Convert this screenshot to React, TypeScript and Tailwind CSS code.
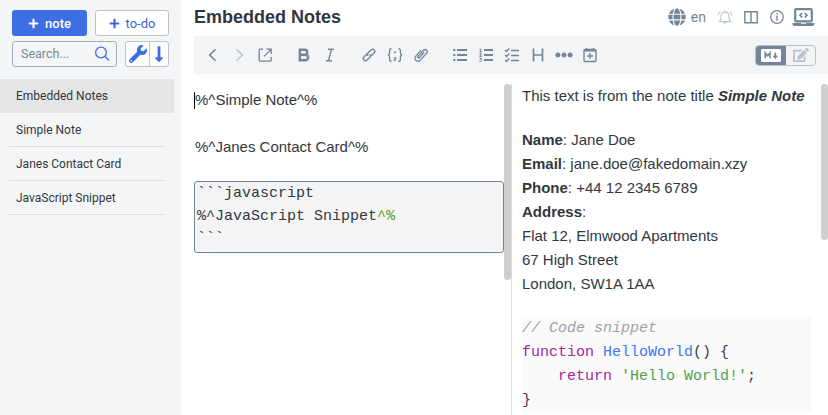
import React from 'react';
import { FaPlus, FaWrench, FaLongArrowAltDown, FaGlobe, FaEdit, FaEllipsisH } from 'react-icons/fa';

type IconProps = { children: React.ReactNode; size?: number };

function Icon({ children, size = 16 }: IconProps) {
  return (
    <svg width={size} height={size} viewBox="0 0 16 16" fill="none" stroke="currentColor" strokeWidth="1.3" className="block shrink-0">
      {children}
    </svg>
  );
}

const Back = () => <Icon><path d="M10.5 2.3 4.7 8l5.8 5.7" strokeWidth="1.6" /></Icon>;
const Forward = () => <Icon><path d="M5.5 2.3 11.3 8l-5.8 5.7" strokeWidth="1.6" /></Icon>;
const External = () => (
  <Icon><path d="M6 2.2H3.2a1 1 0 0 0-1 1v10a1 1 0 0 0 1 1h10a1 1 0 0 0 1-1V10M9.3 2.2h4.9V7M14 2.4 7 9.4" /></Icon>
);
const Bold = () => (
  <Icon><path d="M3.8 2.7h4.9a2.5 2.5 0 0 1 0 5H3.8zm0 5h5.5a2.8 2.8 0 0 1 0 5.6H3.8z" strokeWidth="2.4" /></Icon>
);
const Italic = () => <Icon><path d="M6 2.2h6M4 13.8h6M9.5 2.2l-3 11.6" strokeWidth="1.4" /></Icon>;
const Link = () => (
  <Icon>
    <g transform="rotate(-45 8 8)">
      <path d="M7.2 5.8H3a2.2 2.2 0 0 0 0 4.4H7a2.2 2.2 0 0 0 2.2-2.2M8.8 10.2H13a2.2 2.2 0 0 0 0-4.4H9A2.2 2.2 0 0 0 6.8 8" strokeWidth="1.4" />
    </g>
  </Icon>
);
const Code = () => (
  <Icon>
    <path d="M4.6 1.6c-1.8 0-2 .7-2 2v2.2c0 1.3-.6 2-1.6 2.2 1 .2 1.6.9 1.6 2.2v2.2c0 1.3.2 2 2 2M11.4 1.6c1.8 0 2 .7 2 2v2.2c0 1.3.6 2 1.6 2.2-1 .2-1.6.9-1.6 2.2v2.2c0 1.3-.2 2-2 2" />
    <path d="M8 4.5v1.7M8.4 10v1.5L7.3 14" strokeWidth="1.6" />
  </Icon>
);
const Clip = () => (
  <Icon>
    <path d="m11.2 5.3-4.8 5.4c-.9 1-2.3-.2-1.4-1.3l5.4-6.1c2-2.1 5.2.6 3.3 2.9l-6.2 6.9c-2.9 3.1-7.4-.7-4.7-3.9l5-5.8" strokeWidth="1.3" />
  </Icon>
);
const Bullets = () => (
  <Icon>
    <path d="M5 3h10M5 8h10M5 13h10" strokeWidth="1.8" />
    <path d="M1.2 3h2.2M1.2 8h2.2M1.2 13h2.2" strokeWidth="2" />
  </Icon>
);
const Numbers = () => (
  <Icon>
    <path d="M6 3h9M6 8h9M6 13h9" strokeWidth="1.8" />
    <path d="M1.7 2h1v3M1.5 5h2.3M1.5 6.8h2L1.7 9.4h2.2M1.5 11.5h2l-1 1.3c2 0 1.3 2.2-1 1.7" strokeWidth="1" />
  </Icon>
);
const Checks = () => (
  <Icon>
    <path d="M7 3.5h8M7 8.5h8M7 13.5h8" strokeWidth="1.6" />
    <path d="m1 3 1.5 1.5L5.3 1.6M1 8l1.5 1.5 2.8-2.9M1 13l1.5 1.5 2.8-2.9" strokeWidth="1.4" />
  </Icon>
);
const Heading = () => <Icon><path d="M3.5 1.6v12.8M12.5 1.6v12.8M3.5 8h9" strokeWidth="1.7" /></Icon>;
const DateTime = () => (
  <Icon>
    <rect x="2" y="2.5" width="12" height="12" rx="1.2" strokeWidth="1.4" />
    <path d="M2 3.5h12" strokeWidth="2" />
    <path d="M4.5 1v2M11.5 1v2M8 6v6M5 9h6" />
  </Icon>
);
const Bell = () => (
  <Icon>
    <path d="M6.6 13a1.5 1.5 0 0 0 2.8 0M2.4 12.6h11.2c-1.5-1.4-1.7-2.5-1.7-5.2C11.9 4.6 10 3.2 8 3.2S4.1 4.6 4.1 7.4c0 2.7-.2 3.8-1.7 5.2zM8 3.2V1.5M3.4 2.4C2 3.5 1.3 5 1.1 6.5M12.6 2.4C14 3.5 14.7 5 14.9 6.5" strokeWidth="1.2" />
  </Icon>
);
const Split = () => (
  <Icon><path d="M1.8 2.7h12.4v11H1.8zM8 2.5v11" strokeWidth="1.4" /></Icon>
);
const Info = () => (
  <Icon>
    <circle cx="8" cy="8" r="6.3" strokeWidth="1.2" />
    <path d="M8 6.7v5M8 4.1v1.5" strokeWidth="1.4" />
  </Icon>
);
const Laptop = () => (
  <svg width="23" height="19" viewBox="0 0 23 19" fill="none" stroke="currentColor" className="block">
    <rect x="3.2" y="1.2" width="16.6" height="12.2" rx="1" strokeWidth="2.2" />
    <path d="M0.5 15h22v1a2 2 0 0 1-2 2h-18a2 2 0 0 1-2-2z" fill="currentColor" stroke="none" />
    <path d="M9 15h5v.8H9z" fill="white" stroke="none" />
    <path d="M10.2 5 8 7.2l2.2 2.2M12.8 5 15 7.2l-2.2 2.2" strokeWidth="1.6" />
  </svg>
);
const Markdown = () => (
  <svg width="20" height="13" viewBox="0 0 20 13" className="block">
    <rect width="20" height="13" rx="1.5" fill="white" />
    <path d="M4.2 9.2V4l2.4 2.8L9 4v5.2M14.3 3.6v4.6M12.4 6.8l1.9 2.1 1.9-2.1" fill="none" stroke="#738598" strokeWidth="1.6" />
  </svg>
);

const Cell = ({ children, dim }: { children: React.ReactNode; dim?: boolean }) => (
  <div className={dim ? 'flex w-[26px] items-center justify-center opacity-40' : 'flex w-[26px] items-center justify-center'}>
    {children}
  </div>
);

const notes = ['Simple Note', 'Janes Contact Card', 'JavaScript Snippet'];

function Sidebar() {
  return (
    <aside className="h-full w-[181px] shrink-0 bg-[#f4f5f6] font-['Roboto',sans-serif] text-[#32373f]">
      <div className="flex gap-2 pt-[10px] pl-3 text-[13px]">
        <button className="flex h-[26px] w-[75px] items-center justify-center gap-[6px] rounded-[3px] bg-[#3d6ee3] pt-px font-medium text-white">
          <FaPlus size={11} />note
        </button>
        <button className="flex h-[26px] w-[74px] items-center justify-center gap-[6px] rounded-[3px] border border-[#bfc3c9] bg-white pt-px text-[#3d62d8]">
          <FaPlus size={11} />to-do
        </button>
      </div>
      <div className="flex gap-2 pt-[5px] pl-3">
        <div className="flex h-[26px] w-[105px] items-center justify-between rounded-[3px] border border-[#a5aebc] pr-[6px] pl-2 text-[12.5px] text-[#7c8798]">
          <span>Search...</span>
          <span className="text-[#3d6ee3]">
            <Icon><circle cx="7" cy="6.5" r="5.4" /><path d="m11 10.5 4 4" strokeWidth="1.5" /></Icon>
          </span>
        </div>
        <div className="flex h-[26px] w-[44px] rounded-[3px] border border-[#bfc3c9] bg-white text-[#3d6ee3]">
          <div className="flex w-[25px] items-center justify-center border-r border-[#bfc3c9]"><FaWrench size={18} /></div>
          <div className="flex flex-1 items-center justify-center"><FaLongArrowAltDown size={18} /></div>
        </div>
      </div>
      <div className="mt-3 text-[12px]">
        <div className="flex h-[34px] w-[174px] items-center bg-[#e5e5e5] pl-4">Embedded Notes</div>
        {notes.map((note) => (
          <div key={note} className="mr-4 ml-[9px] flex h-[34px] items-center border-b border-[#dadcde] pl-[7px]">{note}</div>
        ))}
      </div>
    </aside>
  );
}

function Toolbar() {
  return (
    <div className="flex h-[38px] shrink-0 items-center bg-[#f3f4f6] pl-[6px] text-[#738598]">
      <div className="flex"><Cell><Back /></Cell><Cell dim><Forward /></Cell><Cell><External /></Cell></div>
      <div className="ml-[13px] flex"><Cell><Bold /></Cell><Cell><Italic /></Cell></div>
      <div className="ml-[13px] flex"><Cell><Link /></Cell><Cell><Code /></Cell><Cell><Clip /></Cell></div>
      <div className="ml-[13px] flex">
        <Cell><Bullets /></Cell><Cell><Numbers /></Cell><Cell><Checks /></Cell><Cell><Heading /></Cell>
        <Cell><FaEllipsisH size={18} /></Cell><Cell><DateTime /></Cell>
      </div>
      <div className="mr-3 ml-auto flex h-[21px] w-[61px] overflow-hidden rounded-[4px] border border-[#b9c2cb]">
        <div className="-my-px -ml-px flex w-[31px] items-center justify-center bg-[#738598]"><Markdown /></div>
        <div className="flex flex-1 items-center justify-center text-[#b9c2cb]"><FaEdit size={16} /></div>
      </div>
    </div>
  );
}

function Editor() {
  return (
    <div className="w-[310px] shrink-0 pt-[5px] text-[15px]">
      <div className="flex h-[23px] items-center"><span className="h-[17px] w-px bg-black" />%^Simple Note^%</div>
      <div className="mt-[23px] h-[23px] pl-px leading-[23px]">%^Janes Contact Card^%</div>
      <pre className="mt-[23px] h-[72px] rounded-[3px] border border-[#738598] bg-[#f4f4f4] pt-px pl-[2px] font-['Liberation_Mono',monospace] leading-[22px]">
        <div>{'```javascript'}</div>
        <div className="mt-px flex"><span>%^JavaScript Snippet</span><span className="text-[#50a014]">^%</span></div>
        <div>{'```'}</div>
      </pre>
    </div>
  );
}

function Viewer() {
  return (
    <div className="w-[310px] shrink-0 border-l border-[#dcdcdc] pl-[10px] text-[15px] leading-6">
      <p>This text is from the note title <strong><em>Simple Note</em></strong></p>
      <p className="mt-5">
        <strong>Name</strong>: Jane Doe<br />
        <strong>Email</strong>: jane.doe@fakedomain.xzy<br />
        <strong>Phone</strong>: +44 12 2345 6789<br />
        <strong>Address</strong>:<br />
        Flat 12, Elmwood Apartments<br />
        67 High Street<br />
        London, SW1A 1AA
      </p>
      <pre className="mt-[21px] w-[290px] bg-[#fafafa] font-['Liberation_Mono',monospace] text-[#383a42]">
        <div className="text-[#a0a1a7] italic">// Code snippet</div>
        <div className="flex"><span className="text-[#a626a4]">{'function '}</span><span className="text-[#4078f2]">HelloWorld</span><span>{'() {'}</span></div>
        <div className="flex"><span className="text-[#a626a4]">{'    return '}</span><span className="text-[#50a14f]">'Hello World!'</span><span>;</span></div>
        <div>{'}'}</div>
      </pre>
    </div>
  );
}

export default function App() {
  return (
    <div className="flex h-[415px] w-[828px] overflow-hidden bg-white font-['Liberation_Sans',Arial,sans-serif] text-[#32373f]">
      <Sidebar />
      <main className="flex min-w-0 flex-1 flex-col pl-[13px]">
        <header className="flex h-9 shrink-0 items-center justify-between pr-[13px] pb-[2px]">
          <h1 className="text-[18px] font-bold">Embedded Notes</h1>
          <div className="flex items-center text-[#738598]">
            <FaGlobe size={18} />
            <span className="ml-[5px] font-['Roboto',sans-serif] text-[14px]">en</span>
            <span className="ml-[11px] opacity-45"><Bell /></span>
            <span className="ml-[10px]"><Split /></span>
            <span className="ml-[10px]"><Info /></span>
            <span className="ml-[7px]"><Laptop /></span>
          </div>
        </header>
        <Toolbar />
        <div className="flex h-[341px] overflow-hidden pt-[10px]">
          <Editor />
          <div className="h-[196px] w-[7px] shrink-0 rounded-full bg-[#cfcfcf]" />
          <Viewer />
          <div className="h-[156px] w-[7px] shrink-0 rounded-full bg-[#cfcfcf]" />
        </div>
      </main>
    </div>
  );
}
